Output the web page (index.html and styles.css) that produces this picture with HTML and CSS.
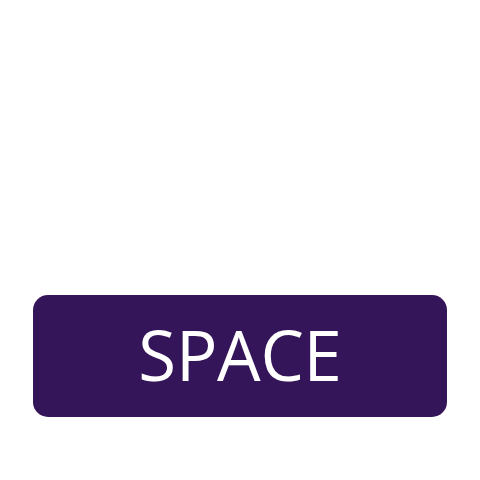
FILE: index.html
```html
<!DOCTYPE html>
<html>
<head>
<meta charset="utf-8">
<link rel="stylesheet" href="styles.css">
</head>
<body>
<div class="page">
  <div class="key">SPACE</div>
</div>
</body>
</html>
```
FILE: styles.css
```css
html, body {
  margin: 0;
  padding: 0;
  background: #ffffff;
}
.page {
  width: 480px;
  height: 480px;
  display: flex;
  flex-direction: column;
  align-items: center;
  padding-top: 295px;
  box-sizing: border-box;
}
.key {
  width: 414px;
  height: 122px;
  box-sizing: border-box;
  padding-bottom: 3px;
  background: #35155a;
  border-radius: 15px;
  display: flex;
  align-items: center;
  justify-content: center;
  color: #ffffff;
  font-family: "Open Sans", sans-serif;
  font-size: 69px;
  line-height: 1;
  letter-spacing: -0.3px;
}
```
